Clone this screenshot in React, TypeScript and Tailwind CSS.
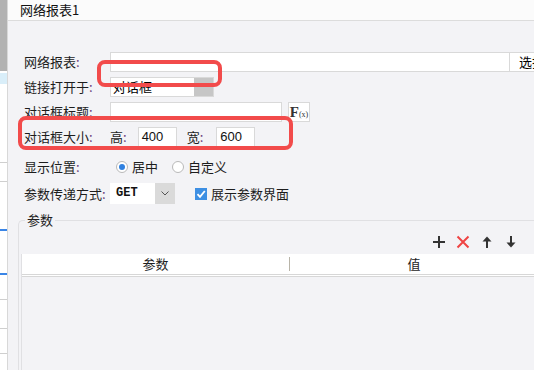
import { FC, ReactNode } from 'react'

const FONT = { fontFamily: '"Noto Sans CJK SC", "Noto Sans", sans-serif' }

const Label: FC<{ text: string }> = ({ text }) => (
  <span className="w-[86px] shrink-0 text-[13px] text-[#1d1d1d]">
    {text}
    <span className="text-[#6d3f7c]">:</span>
  </span>
)

const Row: FC<{ children: ReactNode; className?: string }> = ({ children, className = '' }) => (
  <div className={`flex items-center h-[25px] ${className}`}>{children}</div>
)

const Radio: FC<{ checked?: boolean; label: string }> = ({ checked, label }) => (
  <div className="flex items-center gap-[4px]">
    <span className="w-[12px] h-[12px] rounded-full border border-[#b9b9b9] bg-white flex items-center justify-center">
      {checked && <span className="w-[6px] h-[6px] rounded-full bg-[#2f80e0]" />}
    </span>
    <span className="text-[13px] text-[#1d1d1d]">{label}</span>
  </div>
)

export default function App() {
  return (
    <div className="w-[534px] h-[370px] overflow-hidden flex bg-[#f3f3f6] relative" style={FONT}>
      {/* left strip */}
      <div className="w-[7px] shrink-0 flex flex-col bg-white border-r border-[#d8d8d8] box-content">
        <div className="h-[71px] bg-[#b2b2b2]" />
        <div className="h-[2px]" />
        <div className="h-[11px] bg-[#d9eef9]" />
        <div className="h-[79px] border-b border-[#cfcfcf]" />
        <div className="h-[19px] border-b border-[#cfcfcf]" />
        <div className="h-[49px] border-b-2 border-[#3a85e6]" />
        <div className="h-[44px] border-b-2 border-[#3a85e6]" />
        <div className="h-[25px] border-b border-[#cfcfcf]" />
        <div className="h-[29px] border-b border-[#cfcfcf]" />
        <div className="h-[25px] border-b border-[#cfcfcf]" />
      </div>

      {/* main */}
      <div className="flex-1 flex flex-col min-w-0">
        <div className="h-[21px] shrink-0 bg-[#fbfbfb] border-b border-[#dcdcdc] pl-[12px] flex items-center text-[13px] text-[#111]">
          网络报表1
        </div>

        <div className="pl-[16px] pt-[28px] flex flex-col">
          <Row>
            <Label text="网络报表" />
            <div className="w-[400px] h-[20px] shrink-0 bg-white border border-[#d9d9d9]" />
            <div className="h-[20px] shrink-0 bg-white border-y border-[#d9d9d9] pl-[9px] text-[13px] leading-[18px] whitespace-nowrap">选择</div>
          </Row>
          <Row>
            <Label text="链接打开于" />
            <div className="w-[104px] h-[20px] flex border border-[#d9d9d9] bg-white">
              <span className="flex-1 pl-[2px] text-[13px] leading-[18px]">对话框</span>
              <span className="w-[19px] bg-[#c6c6c6]" />
            </div>
          </Row>
          <Row>
            <Label text="对话框标题" />
            <div className="w-[172px] h-[20px] bg-white border border-[#d9d9d9]" />
            <div className="ml-[6px] w-[22px] h-[20px] bg-white border border-[#d9d9d9] flex items-end justify-center pb-[1px] text-[#333]" style={{ fontFamily: '"Liberation Serif", serif' }}>
              <span className="text-[15px] font-bold leading-none">F</span>
              <span className="text-[8px] leading-[10px]">(x)</span>
            </div>
          </Row>
          <Row>
            <Label text="对话框大小" />
            <span className="text-[13px] text-[#1d1d1d]">高<span className="text-[#6d3f7c]">:</span></span>
            <div className="ml-[11px] w-[39px] h-[20px] bg-white border border-[#d9d9d9] pl-[3px] text-[13px] leading-[18px] text-[#111]" style={{ fontFamily: '"Liberation Sans", sans-serif' }}>400</div>
            <span className="ml-[10px] text-[13px] text-[#1d1d1d]">宽<span className="text-[#6d3f7c]">:</span></span>
            <div className="ml-[13px] w-[39px] h-[20px] bg-white border border-[#d9d9d9] pl-[3px] text-[13px] leading-[18px] text-[#111]" style={{ fontFamily: '"Liberation Sans", sans-serif' }}>600</div>
          </Row>
          <Row className="mt-[5px]">
            <Label text="显示位置" />
            <div className="ml-[6px] flex items-center gap-[14px]">
              <Radio checked label="居中" />
              <Radio label="自定义" />
            </div>
          </Row>
          <Row className="mt-[2px]">
            <Label text="参数传递方式" />
            <div className="w-[65px] h-[21px] flex">
              <span className="flex-1 bg-white pl-[6px] text-[12px] font-bold leading-[21px] text-[#111]" style={{ fontFamily: '"Liberation Mono", monospace' }}>GET</span>
              <span className="w-[20px] bg-[#dadada] flex items-center justify-center">
                <svg width="8" height="5" viewBox="0 0 8 5"><path d="M0.5 0.5 L4 4 L7.5 0.5" fill="none" stroke="#555" strokeWidth="1" /></svg>
              </span>
            </div>
            <div className="ml-[20px] flex items-center gap-[4px]">
              <span className="w-[12px] h-[12px] bg-[#3d8fe3] flex items-center justify-center">
                <svg width="10" height="10" viewBox="0 0 10 10"><path d="M1.5 5.2 L4 7.8 L8.8 2" fill="none" stroke="#fff" strokeWidth="1.8" /></svg>
              </span>
              <span className="text-[13px] text-[#1d1d1d]">展示参数界面</span>
            </div>
          </Row>
        </div>

        <fieldset className="mt-[6px] ml-[10px] flex-1 border-t border-l border-r-0 border-b-0 border-[#e0e0e3] rounded-tl-[5px] pl-[2px] min-w-0">
          <legend className="ml-[4px] px-[2px] text-[13px] leading-[16px] text-[#1d1d1d]">参数</legend>
          <div className="flex justify-end items-center gap-[10px] pr-[16px] h-[22px] mt-[3px]">
            <svg width="14" height="14" viewBox="0 0 14 14"><path d="M7 1v12M1 7h12" stroke="#333" strokeWidth="2" /></svg>
            <svg width="14" height="14" viewBox="0 0 14 14"><path d="M1.5 1.5l11 11M12.5 1.5l-11 11" stroke="#ef4444" strokeWidth="2" /></svg>
            <svg width="14" height="14" viewBox="0 0 14 14"><path d="M7 13V3" stroke="#333" strokeWidth="2" /><path d="M2.5 6.5L7 1.5l4.5 5z" fill="#333" /></svg>
            <svg width="14" height="14" viewBox="0 0 14 14"><path d="M7 1v10" stroke="#333" strokeWidth="2" /><path d="M2.5 7.5L7 12.5l4.5-5z" fill="#333" /></svg>
          </div>
          <div className="mt-[1px] w-[517px] h-[200px] border-l border-[#e0e0e3] flex flex-col">
            <div className="h-[20px] bg-white flex items-center text-[13px] text-[#1d1d1d] border-b-[3px] border-double border-[#d7d7d7] box-content">
              <span className="w-[267px] text-center">参数</span>
              <span className="w-px h-[14px] bg-[#b8b4a8]" />
              <span className="flex-1 text-center">值</span>
            </div>
          </div>
        </fieldset>
      </div>

      {/* annotation boxes */}
      <div className="absolute left-[97px] top-[60px] w-[125px] h-[27px] border-[4px] border-[#f24b4b] rounded-[8px]" />
      <div className="absolute left-[18px] top-[116px] w-[275px] h-[34px] border-[4px] border-[#f24b4b] rounded-[8px]" />
    </div>
  )
}
